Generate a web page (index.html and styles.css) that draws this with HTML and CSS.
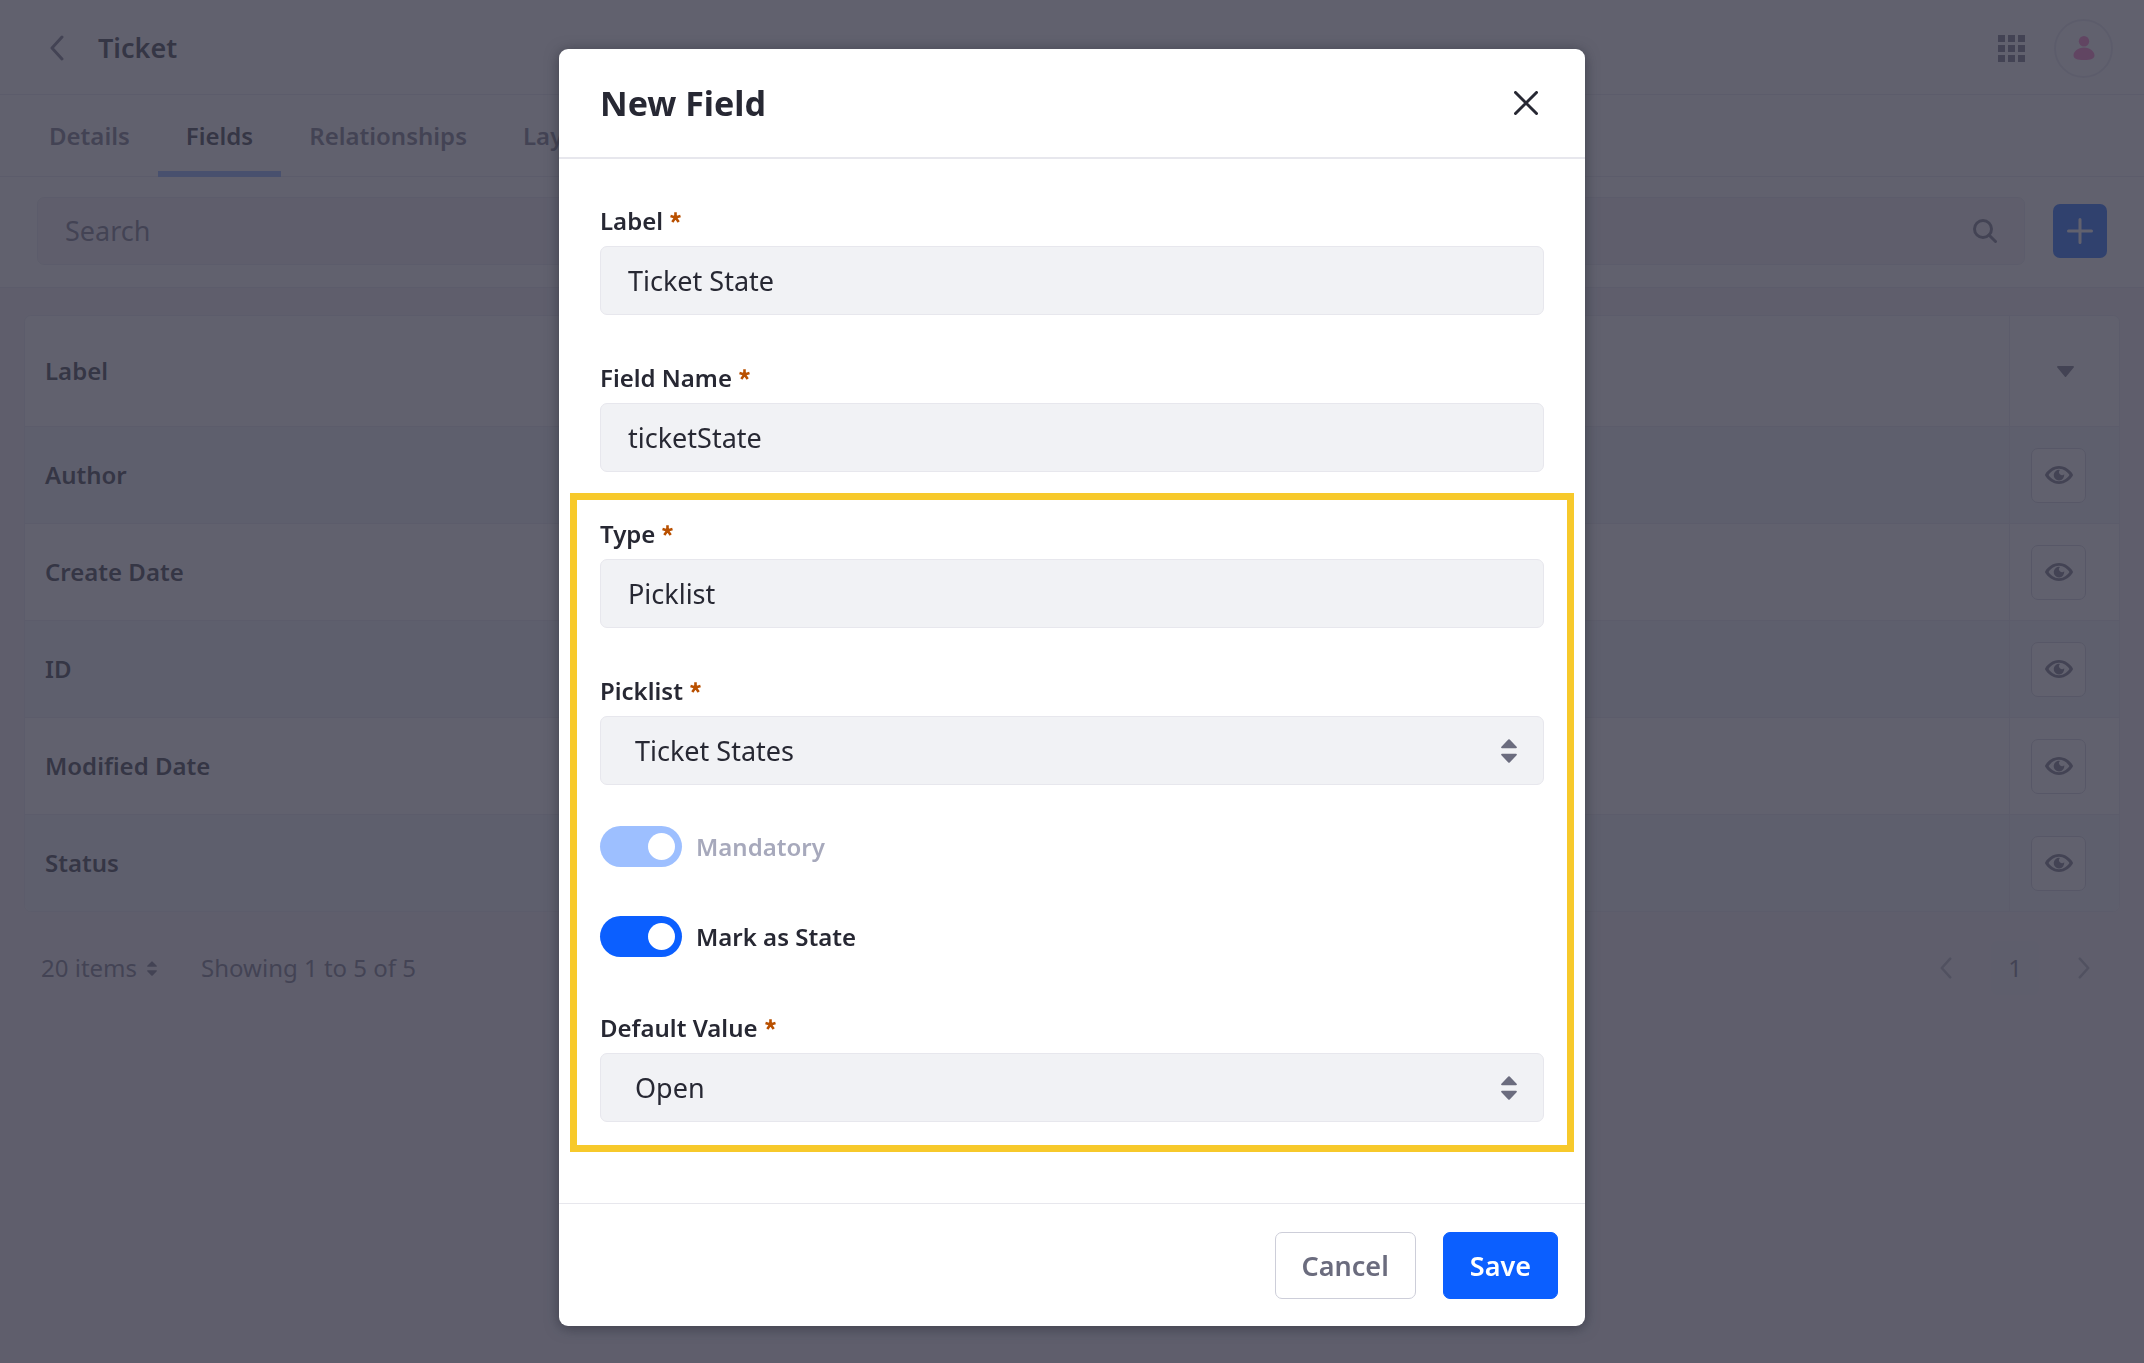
FILE: index.html
```html
<!DOCTYPE html>
<html lang="en">
<head>
<meta charset="utf-8">
<meta name="viewport" content="width=device-width, initial-scale=1">
<title>Ticket - New Field</title>
<link rel="stylesheet" href="styles.css">
</head>
<body>
<svg class="sprite" aria-hidden="true">
  <symbol id="icon-eye" viewBox="0 0 28 18">
    <path fill-rule="evenodd" d="M14 0C7.500 0 2.500 4.500.400 7.900a2 2 0 0 0 0 2.200C2.500 13.500 7.500 18 14 18s11.500-4.500 13.600-7.900a2 2 0 0 0 0-2.200C25.500 4.500 20.500 0 14 0zm0 2.800c4.800 0 8.400 3.200 10.400 6.200-2 3-5.600 6.200-10.400 6.200S5.600 12 3.600 9c2-3 5.600-6.200 10.400-6.200z"/>
    <path d="M15 3.900a5.300 5.300 0 1 0 4.200 4.300 2.700 2.700 0 0 1-4.200-4.300z"/>
  </symbol>
  <symbol id="icon-left" viewBox="0 0 14 26">
    <path d="M12 2 2 13l10 11" fill="none" stroke="currentColor" stroke-width="3" stroke-linecap="round" stroke-linejoin="round"/>
  </symbol>
  <symbol id="icon-right" viewBox="0 0 14 26">
    <path d="m2 2 10 11L2 24" fill="none" stroke="currentColor" stroke-width="3" stroke-linecap="round" stroke-linejoin="round"/>
  </symbol>
  <symbol id="icon-double-caret" viewBox="0 0 16 24">
    <path d="M7.300.600.400 7.700C-.200 8.400.200 9.200 1 9.200h14c.800 0 1.200-.800.600-1.500L8.700.600a1 1 0 0 0-1.400 0zM7.300 23.400.400 16.300c-.600-.700-.200-1.500.600-1.500h14c.800 0 1.200.800.600 1.500l-6.900 7.100a1 1 0 0 1-1.400 0z"/>
  </symbol>
  <symbol id="icon-asterisk" viewBox="0 0 11 11">
    <path d="M5.500 5.500V.300M5.500 5.500.500 4M5.500 5.500l5-1.500M5.500 5.500 2.300 10M5.500 5.500 8.700 10" fill="none" stroke="currentColor" stroke-width="2.600"/>
  </symbol>
</svg>

<div class="page">
  <header class="topbar">
    <a class="back" href="#" aria-label="Back"><svg class="icon-back"><use href="#icon-left"/></svg></a>
    <h1 class="page-title">Ticket</h1>
    <div class="topbar-tools">
      <button class="plain" type="button" aria-label="Applications">
        <svg class="icon-grid" viewBox="0 0 27 27"><path d="M0 0h7v7H0zM10 0h7v7h-7zM20 0h7v7h-7zM0 10h7v7H0zM10 10h7v7h-7zM20 10h7v7h-7zM0 20h7v7H0zM10 20h7v7h-7zM20 20h7v7h-7z"/></svg>
      </button>
      <button class="avatar" type="button" aria-label="User profile">
        <svg class="icon-user" viewBox="0 0 22 24"><circle cx="11" cy="5.200" r="5.200"/><path d="M11 11.600c6 0 10.500 4 10.500 7.800 0 3-3.500 4.600-10.500 4.600S.500 22.400.500 19.400c0-3.800 4.500-7.800 10.500-7.800z"/></svg>
      </button>
    </div>
  </header>

  <nav class="tabs">
    <a class="tab" href="#">Details</a>
    <a class="tab tab-active" href="#" aria-current="page">Fields</a>
    <a class="tab" href="#">Relationships</a>
    <a class="tab" href="#">Layouts</a>
  </nav>

  <div class="toolbar">
    <div class="search">
      <input class="search-input" type="search" placeholder="Search" aria-label="Search">
      <button class="plain" type="button" aria-label="Submit search">
        <svg class="icon-search" viewBox="0 0 24 24"><circle cx="10" cy="10" r="8.500"/><path d="m16 16 6.500 6.500"/></svg>
      </button>
    </div>
    <button class="add" type="button" aria-label="Add field">
      <svg class="icon-plus" viewBox="0 0 26 26"><path d="M13 1.500v23M1.500 13h23"/></svg>
    </button>
  </div>

  <main class="content">
    <table class="fields-table">
      <thead>
        <tr>
          <th scope="col">Label</th>
          <th class="actions" scope="col"><button class="plain" type="button" aria-label="Columns"><svg class="icon-caret" viewBox="0 0 17 11"><path d="M1 0h15c.900 0 1.300.900.700 1.600L9.300 10.400a1 1 0 0 1-1.600 0L.300 1.600C-.300.900.100 0 1 0z"/></svg></button></th>
        </tr>
      </thead>
      <tbody>
        <tr><td>Author</td><td class="actions"><button class="view" type="button" aria-label="View Author"><svg class="icon-eye"><use href="#icon-eye"/></svg></button></td></tr>
        <tr><td>Create Date</td><td class="actions"><button class="view" type="button" aria-label="View Create Date"><svg class="icon-eye"><use href="#icon-eye"/></svg></button></td></tr>
        <tr><td>ID</td><td class="actions"><button class="view" type="button" aria-label="View ID"><svg class="icon-eye"><use href="#icon-eye"/></svg></button></td></tr>
        <tr><td>Modified Date</td><td class="actions"><button class="view" type="button" aria-label="View Modified Date"><svg class="icon-eye"><use href="#icon-eye"/></svg></button></td></tr>
        <tr><td>Status</td><td class="actions"><button class="view" type="button" aria-label="View Status"><svg class="icon-eye"><use href="#icon-eye"/></svg></button></td></tr>
      </tbody>
    </table>

    <div class="pagination">
      <button class="plain page-size" type="button">20 items <svg class="icon-size"><use href="#icon-double-caret"/></svg></button>
      <span>Showing 1 to 5 of 5</span>
      <div class="pager">
        <button class="plain" type="button" aria-label="Previous page" disabled><svg class="icon-page"><use href="#icon-left"/></svg></button>
        <a class="page-number" href="#" aria-current="page">1</a>
        <button class="plain" type="button" aria-label="Next page" disabled><svg class="icon-page"><use href="#icon-right"/></svg></button>
      </div>
    </div>
  </main>
</div>

<div class="backdrop">
  <form class="modal" role="dialog" aria-modal="true" aria-labelledby="modal-title">
    <header class="modal-header">
      <h2 class="modal-title" id="modal-title">New Field</h2>
      <button class="plain close" type="button" aria-label="Close">
        <svg class="icon-close" viewBox="0 0 24 24"><path d="m1.500 1.500 21 21M22.500 1.500l-21 21"/></svg>
      </button>
    </header>

    <div class="modal-body">
      <div class="field">
        <label class="field-label" for="label">Label <svg class="required"><use href="#icon-asterisk"/></svg></label>
        <input class="control" id="label" type="text" value="Ticket State" required>
      </div>
      <div class="field">
        <label class="field-label" for="name">Field Name <svg class="required"><use href="#icon-asterisk"/></svg></label>
        <input class="control" id="name" type="text" value="ticketState" required>
      </div>

      <section class="highlight">
        <div class="field">
          <label class="field-label" for="type">Type <svg class="required"><use href="#icon-asterisk"/></svg></label>
          <input class="control" id="type" type="text" value="Picklist" required>
        </div>
        <div class="field">
          <label class="field-label" for="picklist">Picklist <svg class="required"><use href="#icon-asterisk"/></svg></label>
          <div class="select">
            <select class="control" id="picklist"><option>Ticket States</option></select>
            <svg class="icon-select"><use href="#icon-double-caret"/></svg>
          </div>
        </div>
        <div class="switches">
          <label class="switch"><input class="switch-input" type="checkbox" checked disabled>Mandatory</label>
          <label class="switch"><input class="switch-input" type="checkbox" checked>Mark as State</label>
        </div>
        <div class="field">
          <label class="field-label" for="default">Default Value <svg class="required"><use href="#icon-asterisk"/></svg></label>
          <div class="select">
            <select class="control" id="default"><option>Open</option></select>
            <svg class="icon-select"><use href="#icon-double-caret"/></svg>
          </div>
        </div>
      </section>
    </div>

    <footer class="modal-footer">
      <button class="button" type="button">Cancel</button>
      <button class="button button-primary" type="submit">Save</button>
    </footer>
  </form>
</div>
</body>
</html>
```
FILE: styles.css
```css
:root {
  --dark: #272833;
  --secondary: #6b6c7e;
  --border: #e7e7ed;
  --light: #f1f2f5;
  --canvas: #f3f1f6;
  --primary: #0b5fff;
}

* {
  box-sizing: border-box;
}

body {
  margin: 0;
  background: var(--canvas);
  color: var(--dark);
  font: 400 24px/36px "Noto Sans", sans-serif;
}

button,
input,
select {
  font: inherit;
  color: inherit;
}

svg {
  display: block;
  fill: currentColor;
}

a {
  color: inherit;
  text-decoration: none;
}

.sprite {
  position: absolute;
  width: 0;
  height: 0;
}

.plain {
  display: flex;
  align-items: center;
  padding: 0;
  border: 0;
  background: none;
  color: var(--secondary);
}

/* Page header */

.topbar {
  display: flex;
  align-items: center;
  height: 95px;
  padding: 2px 31px 0 50px;
  border-bottom: 1px solid var(--border);
  background: #fff;
}

.back {
  color: var(--secondary);
}

.icon-back {
  width: 14px;
  height: 26px;
}

.page-title {
  margin: 0 0 0 34px;
  font-size: 27px;
  font-weight: 600;
}

.topbar-tools {
  display: flex;
  align-items: center;
  gap: 29px;
  margin-left: auto;
}

.icon-grid {
  width: 27px;
  height: 27px;
}

.avatar {
  display: grid;
  place-items: center;
  width: 59px;
  height: 59px;
  padding: 0;
  border: 2px solid var(--border);
  border-radius: 50%;
  background: #fff;
  color: #ff73c3;
}

.icon-user {
  width: 22px;
  height: 24px;
}

.tabs {
  display: flex;
  height: 82px;
  padding-left: 21px;
  border-bottom: 1px solid var(--border);
  background: #fff;
}

.tab {
  height: 82px;
  padding: 23px 28px 0;
  color: var(--secondary);
  font-weight: 600;
}

.tab-active {
  border-bottom: 6px solid #80acff;
  color: var(--dark);
}

.toolbar {
  display: flex;
  align-items: center;
  gap: 28px;
  padding: 20px 37px 22px;
  border-bottom: 1px solid var(--border);
  background: #fff;
}

.search {
  display: flex;
  flex: 1;
  height: 68px;
  padding: 0 27px;
  border: 1px solid var(--border);
  border-radius: 7px;
  background: var(--canvas);
}

.search-input {
  flex: 1;
  min-width: 0;
  padding: 0;
  border: 0;
  background: none;
  font-size: 27px;
  outline: 0;
}

.search-input::placeholder {
  color: var(--secondary);
  opacity: 1;
}

.icon-search {
  width: 24px;
  height: 24px;
  fill: none;
  stroke: currentColor;
  stroke-width: 3;
  stroke-linecap: round;
}

.add {
  display: grid;
  place-items: center;
  width: 54px;
  height: 54px;
  padding: 0;
  border: 0;
  border-radius: 7px;
  background: var(--primary);
  color: #fff;
}

.icon-plus {
  width: 26px;
  height: 26px;
  stroke: currentColor;
  stroke-width: 3;
  stroke-linecap: round;
}

/* Fields table */

.content {
  padding: 27px 24px;
}

.fields-table {
  width: 100%;
  border: 1px solid var(--border);
  border-radius: 7px;
  border-spacing: 0;
  overflow: hidden;
  background: #fff;
}

.fields-table th,
.fields-table td {
  height: 97px;
  padding: 0 20px;
  border-top: 1px solid var(--border);
  font-weight: 600;
  text-align: left;
}

.fields-table th {
  height: 110px;
  border-top: 0;
}

.fields-table .actions {
  width: 110px;
  padding: 0 20px 0 21px;
  border-left: 1px solid var(--border);
}

.fields-table th .plain {
  margin: 0 auto;
}

.fields-table tbody tr:nth-child(odd) {
  background: #f0f5fa;
}

.icon-caret {
  width: 17px;
  height: 11px;
}

.view {
  display: grid;
  place-items: center;
  width: 55px;
  height: 55px;
  padding: 0;
  border: 1px solid #cdced9;
  border-radius: 7px;
  background: #fff;
  color: var(--secondary);
}

.icon-eye {
  width: 28px;
  height: 18px;
}

.pagination {
  display: flex;
  align-items: center;
  gap: 44px;
  padding: 29px 29px 0 17px;
  color: var(--secondary);
}

.page-size {
  gap: 10px;
}

.icon-size {
  width: 10px;
  height: 15px;
}

.pager {
  display: flex;
  align-items: center;
  gap: 38px;
  margin-left: auto;
}

.icon-page {
  width: 14px;
  height: 22px;
  opacity: 0.5;
}

.page-number {
  padding: 9px 17px;
  border-radius: 7px;
  background: #eeeff3;
}

/* Dialog */

.backdrop {
  position: fixed;
  inset: 0;
  padding: 49px 24px 37px;
  overflow: auto;
  background: rgba(57, 58, 74, 0.8);
}

.modal {
  max-width: 1026px;
  margin: 0 auto;
  border-radius: 9px;
  background: #fff;
  box-shadow: 0 2px 14px rgba(39, 40, 51, 0.6);
}

.modal-header {
  display: flex;
  align-items: center;
  justify-content: space-between;
  height: 110px;
  padding: 0 47px 0 41px;
  border-bottom: 2px solid var(--border);
}

.modal-title {
  margin: 0;
  font-size: 34px;
  font-weight: 700;
}

.close {
  color: var(--dark);
}

.icon-close {
  width: 24px;
  height: 24px;
  stroke: currentColor;
  stroke-width: 3;
  stroke-linecap: round;
}

.modal-body {
  padding: 44px 41px 51px;
}

.field + .field {
  margin-top: 45px;
}

.field-label {
  display: flex;
  gap: 7px;
  margin-bottom: 7px;
  font-weight: 600;
}

.required {
  width: 11px;
  height: 11px;
  margin-top: 9px;
  color: #b95000;
}

.control {
  display: block;
  width: 100%;
  height: 69px;
  padding: 0 27px;
  border: 1px solid var(--border);
  border-radius: 7px;
  background: var(--light);
  font-size: 27px;
}

.select {
  display: grid;
  align-items: center;
}

.select .control,
.icon-select {
  grid-area: 1 / 1;
}

.select .control {
  padding: 0 34px;
  appearance: none;
}

.icon-select {
  justify-self: end;
  width: 16px;
  height: 24px;
  margin-right: 27px;
  color: var(--secondary);
  pointer-events: none;
}

/* Outlined group of state-related settings */

.highlight {
  margin: 21px -30px 0;
  padding: 16px 23px 23px;
  border: 7px solid #f7c92b;
}

.switches {
  display: grid;
  gap: 49px;
  margin: 41px 0 53px;
}

.switch {
  display: flex;
  align-items: center;
  gap: 14px;
  font-weight: 600;
}

.switch-input {
  width: 82px;
  height: 41px;
  margin: 0;
  padding: 7px;
  border-radius: 21px;
  background: var(--primary);
  appearance: none;
}

.switch-input::before {
  content: "";
  display: block;
  width: 27px;
  height: 27px;
  margin-left: auto;
  border-radius: 50%;
  background: #fff;
}

.switch:has(:disabled) {
  color: #a7a9bc;
}

.switch-input:disabled {
  background: #9dbfff;
}

.modal-footer {
  display: flex;
  justify-content: flex-end;
  gap: 27px;
  padding: 28px 27px 27px;
  border-top: 1px solid var(--border);
}

.button {
  height: 67px;
  padding: 0 26px;
  border: 1px solid #cdced9;
  border-radius: 7px;
  background: #fff;
  color: var(--secondary);
  font-size: 27px;
  font-weight: 600;
}

.button-primary {
  border-color: var(--primary);
  background: var(--primary);
  color: #fff;
}
```
